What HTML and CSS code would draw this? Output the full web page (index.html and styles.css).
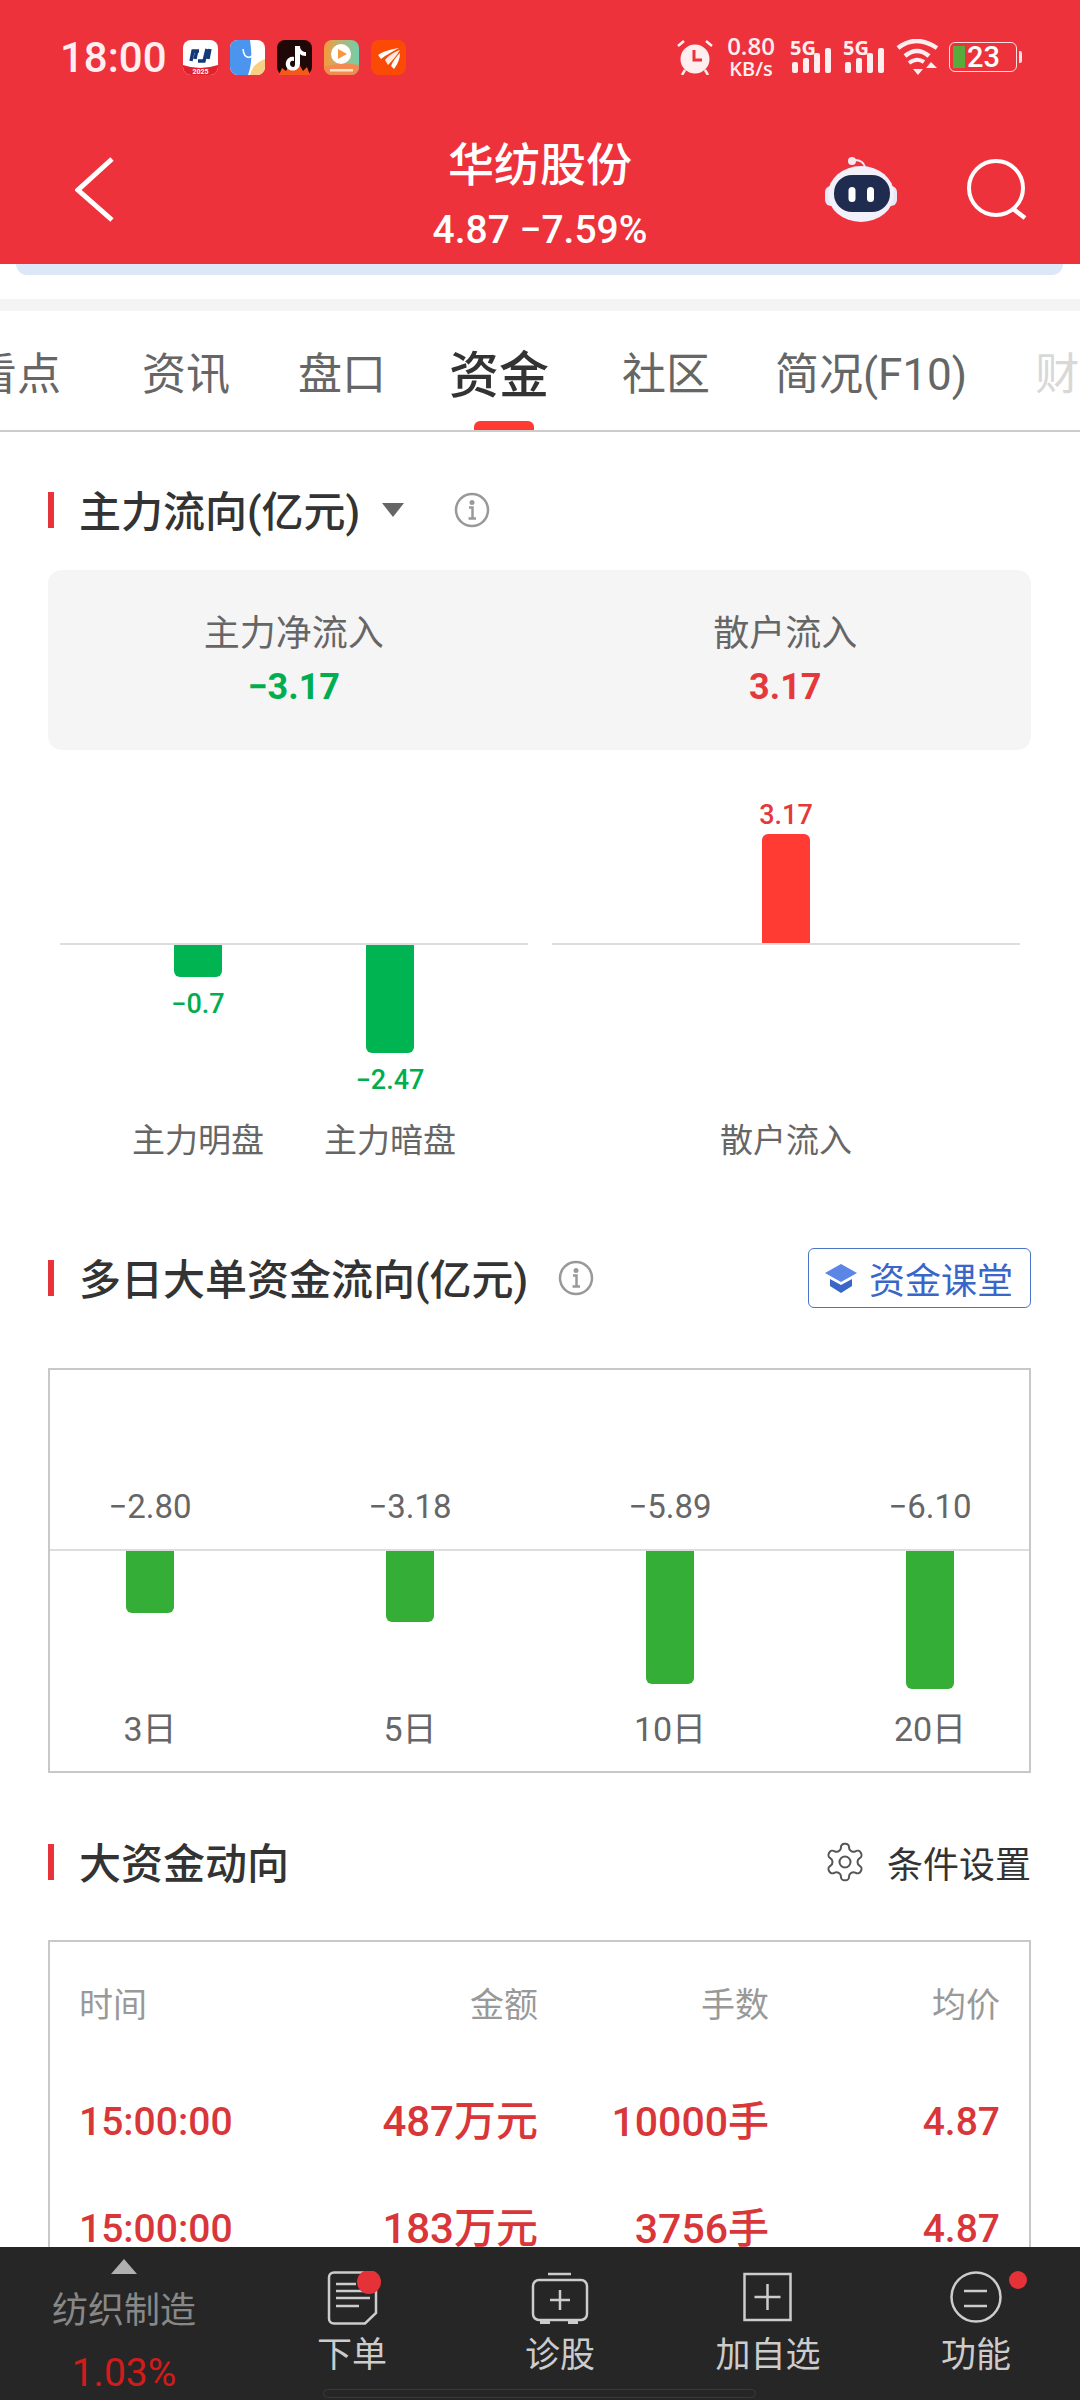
FILE: index.html
```html
<!DOCTYPE html>
<html lang="zh-CN">
<head>
    <meta charset="UTF-8">
    <meta name="viewport" content="width=device-width, initial-scale=1.0">
    <title>华纺股份</title>
    <link rel="stylesheet" href="styles.css">
</head>
<body>
    <header class="header">
        <div class="status-bar">
            <span class="time">18:00</span>
            <div class="app-icons">
                <svg class="app-icon" viewBox="0 0 35 35">
                    <rect width="35" height="35" rx="8" fill="#fff"/>
                    <path d="M0 25Q17 31 35 25V27a8 8 0 0 1-8 8H8a8 8 0 0 1-8-8z" fill="#e0222f"/>
                    <path d="M8 21L10 11H16M14 10L12 19M15 21H21L24 9M27 9L25 19" fill="none" stroke="#123a78" stroke-width="3.4"/>
                    <text x="17.5" y="33.5" class="app-tiny">2025</text>
                </svg>
                <svg class="app-icon" viewBox="0 0 35 35">
                    <rect width="35" height="35" rx="8" fill="#fff"/>
                    <path d="M8 0H20C22 14 22 24 18 35H8a8 8 0 0 1-8-8V8a8 8 0 0 1 8-8z" fill="#4c95ee"/>
                    <path d="M20 35C22 28 25 23 35 19V27a8 8 0 0 1-8 8z" fill="#f8d084"/>
                    <path d="M13 9C14 20 24 20 24 10" fill="none" stroke="#fff" stroke-width="1.6"/>
                </svg>
                <svg class="app-icon" viewBox="0 0 35 35">
                    <rect width="35" height="35" rx="8" fill="#200808"/>
                    <path d="M2 35L5 28L9 31L12 25L17 30L22 24L26 31L30 27L33 35z" fill="#f4581c"/>
                    <path d="M18 6H23C23 10 26 12 29 12V16C26 16 24 15 23 14V23C23 28 19 31 15 30.500C10 30 8 26 9 22C10 18 14 16 17 17V21C14 20 13 22 13 24C13 26 15 27 16 27C18 27 18 25 18 23z" fill="#fff"/>
                </svg>
                <svg class="app-icon" viewBox="0 0 35 35">
                    <defs>
                        <linearGradient id="playGrad" x1="0" y1="0" x2="1" y2="0">
                            <stop offset="0" stop-color="#f79a3c"/>
                            <stop offset="1" stop-color="#6fd0b0"/>
                        </linearGradient>
                    </defs>
                    <rect width="35" height="35" rx="8" fill="url(#playGrad)"/>
                    <path d="M0 27Q17 21 35 25V27a8 8 0 0 1-8 8H8a8 8 0 0 1-8-8z" fill="#f58a50"/>
                    <circle cx="17" cy="14" r="10" fill="#fff"/>
                    <path d="M14 9L23 14L14 19z" fill="#f59a3c"/>
                    <rect x="6" y="29" width="23" height="2.500" fill="#ffe2c8"/>
                </svg>
                <svg class="app-icon" viewBox="0 0 35 35">
                    <rect width="35" height="35" rx="8" fill="#fb4a05"/>
                    <path d="M7 15C13 11 20 9 28 8C22 11 15 15 10 19z" fill="#fff"/>
                    <path d="M14 20C17 16 23 12 29 10C26 15 21 21 17 25z" fill="#ffe9df"/>
                    <path d="M20 26C22 21 26 16 29 13C29 18 27 24 23 29z" fill="#fff"/>
                </svg>
            </div>
            <div class="status-right">
                <svg class="alarm" viewBox="0 0 36 36">
                    <circle cx="18" cy="20" r="14.500" fill="#ffeef0"/>
                    <path d="M1 7L7 2M35 7L29 2M5 36L8 31M31 36L28 31" stroke="#ffeef0" stroke-width="2.500"/>
                    <path d="M17 11V21H25" fill="none" stroke="#ee323c" stroke-width="3"/>
                </svg>
                <div class="net-speed">
                    <span class="net-num">0.80</span>
                    <span class="net-unit">KB/s</span>
                </div>
                <svg class="signal" viewBox="0 -8 42 48">
                    <text x="0" y="18" class="signal-label">5G</text>
                    <rect x="2" y="25" width="6" height="11" rx="2"/>
                    <rect x="13" y="21" width="6" height="15" rx="2"/>
                    <rect x="24" y="16" width="6" height="20" rx="2"/>
                    <rect x="35" y="11" width="6" height="25" rx="2"/>
                </svg>
                <svg class="signal" viewBox="0 -8 42 48">
                    <text x="0" y="18" class="signal-label">5G</text>
                    <rect x="2" y="25" width="6" height="11" rx="2"/>
                    <rect x="13" y="21" width="6" height="15" rx="2"/>
                    <rect x="24" y="16" width="6" height="20" rx="2"/>
                    <rect x="35" y="11" width="6" height="25" rx="2"/>
                </svg>
                <svg class="wifi" viewBox="0 0 43 36">
                    <path d="M2 9Q20 -5 41 9M9 17Q21 7 33 17" fill="none" stroke="#ffeef0" stroke-width="4.500"/>
                    <path d="M13 24Q21 18 28 23" fill="none" stroke="#ffeef0" stroke-width="4"/>
                    <path d="M17 30H27L22 36z" fill="#ffeef0"/>
                    <path d="M30 29L35 23L41 29z" fill="#ffeef0"/>
                </svg>
                <div class="battery">
                    <span class="battery-fill"></span>
                    <span class="battery-num">23</span>
                </div>
            </div>
        </div>
        <div class="nav-bar">
            <div class="nav-left">
                <svg class="back-icon" viewBox="0 0 40 66">
                    <path d="M37 3L3 34L37 64" fill="none" stroke="#fff" stroke-width="5"/>
                </svg>
            </div>
            <div class="nav-title">
                <div class="stock-name">华纺股份</div>
                <div class="stock-price">4.87 −7.59%</div>
            </div>
            <div class="nav-right">
                <svg class="robot" viewBox="0 0 72 66">
                    <circle cx="27" cy="5" r="4" fill="#f4e9f2"/>
                    <path d="M30 4Q38 4 40 11" fill="none" stroke="#f4e9f2" stroke-width="2"/>
                    <rect x="0" y="30" width="72" height="20" rx="6" fill="#e6e8f6"/>
                    <ellipse cx="36" cy="38" rx="33" ry="28" fill="#f2f1fb"/>
                    <rect x="9" y="19" width="56" height="37" rx="18" fill="#1f2c50"/>
                    <rect x="23.500" y="31" width="7" height="15" rx="3.500" fill="#fff"/>
                    <rect x="42" y="31" width="7" height="15" rx="3.500" fill="#fff"/>
                </svg>
                <svg class="search-icon" viewBox="0 0 64 62">
                    <circle cx="31" cy="30" r="27" fill="none" stroke="#fff" stroke-width="4"/>
                    <path d="M47 50L60 60" stroke="#fff" stroke-width="4.500"/>
                </svg>
            </div>
        </div>
    </header>
    <div class="promo-strip"></div>
    <div class="grey-gap"></div>

    <nav class="tabs">
        <span class="tab tab-first">看点</span>
        <span class="tab">资讯</span>
        <span class="tab">盘口</span>
        <span class="tab active">资金</span>
        <span class="tab">社区</span>
        <span class="tab tab-f10">简况(F10)</span>
        <span class="tab faded">财务</span>
    </nav>

    <section class="section flow-section">
        <div class="sec-head">
            <h2 class="sec-title">主力流向(亿元)</h2>
            <span class="caret"></span>
            <svg class="info-icon info-far" viewBox="0 0 36 36">
                <circle cx="18" cy="18" r="16" fill="none" stroke="#999" stroke-width="2.500"/>
                <circle cx="18" cy="10.500" r="2.500" fill="#999"/>
                <path d="M15 15.500H18.500V26M14.500 26.500H22" fill="none" stroke="#999" stroke-width="2.500"/>
            </svg>
        </div>
        <div class="summary-card">
            <div class="summary-col">
                <div class="summary-label">主力净流入</div>
                <div class="summary-value green">−3.17</div>
            </div>
            <div class="summary-col">
                <div class="summary-label">散户流入</div>
                <div class="summary-value red">3.17</div>
            </div>
        </div>
        <div class="flow-chart">
            <div class="flow-panel">
                <div class="up-row">
                    <div class="flow-col"></div>
                    <div class="flow-col"></div>
                </div>
                <div class="down-row">
                    <div class="flow-col">
                        <div class="flow-bar bar-green" style="height: 32px"></div>
                        <div class="flow-num green">−0.7</div>
                    </div>
                    <div class="flow-col">
                        <div class="flow-bar bar-green" style="height: 108px"></div>
                        <div class="flow-num green">−2.47</div>
                    </div>
                </div>
                <div class="name-row">
                    <div class="flow-name">主力明盘</div>
                    <div class="flow-name">主力暗盘</div>
                </div>
            </div>
            <div class="flow-panel">
                <div class="up-row">
                    <div class="flow-col">
                        <div class="flow-num red">3.17</div>
                        <div class="flow-bar bar-red" style="height: 109px"></div>
                    </div>
                </div>
                <div class="down-row"></div>
                <div class="name-row">
                    <div class="flow-name">散户流入</div>
                </div>
            </div>
        </div>
    </section>

    <section class="section days-section">
        <div class="sec-head sec-head-tall">
            <h2 class="sec-title">多日大单资金流向(亿元)</h2>
            <svg class="info-icon info-near" viewBox="0 0 36 36">
                <circle cx="18" cy="18" r="16" fill="none" stroke="#999" stroke-width="2.500"/>
                <circle cx="18" cy="10.500" r="2.500" fill="#999"/>
                <path d="M15 15.500H18.500V26M14.500 26.500H22" fill="none" stroke="#999" stroke-width="2.500"/>
            </svg>
            <div class="class-btn">
                <svg class="cap-icon" viewBox="0 0 34 34">
                    <path d="M17 3L33 12L17 21L1 12z" fill="#5b86e5"/>
                    <path d="M6 18L17 24L28 18V25L17 32L6 25z" fill="#3a66c8"/>
                </svg>
                <span>资金课堂</span>
            </div>
        </div>
        <div class="days-box">
            <div class="days-up">
                <div class="days-num">−2.80</div>
                <div class="days-num">−3.18</div>
                <div class="days-num">−5.89</div>
                <div class="days-num">−6.10</div>
            </div>
            <div class="days-down">
                <div class="days-col"><div class="days-bar" style="height: 62px"></div></div>
                <div class="days-col"><div class="days-bar" style="height: 71px"></div></div>
                <div class="days-col"><div class="days-bar" style="height: 133px"></div></div>
                <div class="days-col"><div class="days-bar" style="height: 138px"></div></div>
            </div>
            <div class="days-names">
                <div class="days-name">3日</div>
                <div class="days-name">5日</div>
                <div class="days-name">10日</div>
                <div class="days-name">20日</div>
            </div>
        </div>
    </section>

    <section class="section big-section">
        <div class="sec-head">
            <h2 class="sec-title">大资金动向</h2>
            <div class="settings">
                <svg class="gear-icon" viewBox="0 0 24 24">
                    <path d="M12.220 2h-.44a2 2 0 0 0-2 2v.18a2 2 0 0 1-1 1.730l-.43.25a2 2 0 0 1-2 0l-.15-.08a2 2 0 0 0-2.730.73l-.22.38a2 2 0 0 0 .73 2.730l.15.1a2 2 0 0 1 1 1.720v.51a2 2 0 0 1-1 1.740l-.15.09a2 2 0 0 0-.73 2.730l.22.38a2 2 0 0 0 2.730.73l.15-.08a2 2 0 0 1 2 0l.43.25a2 2 0 0 1 1 1.730V20a2 2 0 0 0 2 2h.44a2 2 0 0 0 2-2v-.18a2 2 0 0 1 1-1.730l.43-.25a2 2 0 0 1 2 0l.15.08a2 2 0 0 0 2.730-.73l.22-.39a2 2 0 0 0-.73-2.730l-.15-.08a2 2 0 0 1-1-1.740v-.5a2 2 0 0 1 1-1.740l.15-.09a2 2 0 0 0 .73-2.730l-.22-.38a2 2 0 0 0-2.730-.73l-.15.08a2 2 0 0 1-2 0l-.43-.25a2 2 0 0 1-1-1.730V4a2 2 0 0 0-2-2z" fill="none" stroke="#555" stroke-width="1.100"/>
                    <circle cx="12" cy="12" r="3" fill="none" stroke="#555" stroke-width="1.100"/>
                </svg>
                <span>条件设置</span>
            </div>
        </div>
        <div class="trade-box">
            <div class="trade-row trade-head">
                <span class="cell-time">时间</span>
                <span>金额</span>
                <span>手数</span>
                <span>均价</span>
            </div>
            <div class="trade-row">
                <span class="cell-time cell-num">15:00:00</span>
                <span>487万元</span>
                <span class="cell-lots">10000手</span>
                <span class="cell-num">4.87</span>
            </div>
            <div class="trade-row">
                <span class="cell-time cell-num">15:00:00</span>
                <span>183万元</span>
                <span class="cell-lots">3756手</span>
                <span class="cell-num">4.87</span>
            </div>
        </div>
    </section>

    <footer class="bottom-bar">
        <div class="sector">
            <span class="sector-arrow"></span>
            <div class="sector-name">纺织制造</div>
            <div class="sector-pct">1.03%</div>
        </div>
        <div class="bar-item">
            <svg class="bar-icon" viewBox="0 0 60 54">
                <path d="M12 1.500H43C49 1.500 54 5 54 11V42L43 52.500H12C9 52.500 7 50.500 7 47.500V6.500C7 3.500 9 1.500 12 1.500z" fill="none" stroke="#ccc" stroke-width="2.500"/>
                <path d="M14 13H34M14 20H48M14 27H48M14 35H37" stroke="#ccc" stroke-width="2.500"/>
                <circle cx="47" cy="11" r="12" fill="#e53238"/>
            </svg>
            <span class="bar-label">下单</span>
        </div>
        <div class="bar-item">
            <svg class="bar-icon" viewBox="0 0 60 54">
                <path d="M18 3H41" stroke="#ccc" stroke-width="2.500"/>
                <rect x="3" y="9" width="54" height="40" rx="6" fill="none" stroke="#ccc" stroke-width="2.500"/>
                <path d="M10 49H20V53H10zM38 49H48V53H38z" fill="#ccc"/>
                <path d="M30 19V39M20 29H40" stroke="#ccc" stroke-width="2.500"/>
            </svg>
            <span class="bar-label">诊股</span>
        </div>
        <div class="bar-item">
            <svg class="bar-icon" viewBox="0 0 60 54">
                <rect x="6.500" y="3" width="46" height="46" fill="none" stroke="#ccc" stroke-width="2.500"/>
                <path d="M29.500 13V39M16.500 26H42.500" stroke="#ccc" stroke-width="2.500"/>
            </svg>
            <span class="bar-label">加自选</span>
        </div>
        <div class="bar-item">
            <svg class="bar-icon bar-icon-dot" viewBox="0 0 60 54">
                <circle cx="30" cy="26" r="24.500" fill="none" stroke="#ccc" stroke-width="2.500"/>
                <path d="M18 20H41M18 35H41" stroke="#ccc" stroke-width="2.500"/>
                <circle cx="72" cy="9" r="9" fill="#e53238"/>
            </svg>
            <span class="bar-label">功能</span>
        </div>
        <div class="home-pill"></div>
    </footer>
</body>
</html>
```

FILE: styles.css
```css
body {
    font-family: Roboto, 'Noto Sans CJK SC', sans-serif;
    background-color: #fff;
    position: relative;
    width: 1080px;
    height: 2400px;
    margin: 0;
    overflow: hidden;
    color: #333;
}
.green {
    color: #00ae50;
}
.red {
    color: #e5383b;
}

/* header */
.header {
    height: 264px;
    background-color: #ee323c;
}
.status-bar {
    display: flex;
    align-items: center;
    height: 114px;
    padding: 0 63px 0 60px;
}
.time {
    font-size: 42px;
    font-weight: 500;
    color: #ffeef0;
}
.app-icons {
    display: flex;
    gap: 12px;
    margin-left: 16px;
}
.app-icon {
    width: 35px;
    height: 35px;
}
.app-tiny {
    font-family: Roboto, sans-serif;
    font-size: 7px;
    font-weight: 700;
    fill: #fff;
    text-anchor: middle;
}
.status-right {
    display: flex;
    align-items: center;
    margin-left: auto;
}
.alarm {
    width: 36px;
    height: 36px;
    margin-right: 15px;
}
.net-speed {
    display: flex;
    flex-direction: column;
    align-items: center;
    width: 46px;
    margin-right: 16px;
    color: #ffeef0;
    font-family: 'Open Sans', sans-serif;
    font-weight: 600;
}
.net-num {
    font-size: 24px;
    line-height: 24px;
}
.net-unit {
    font-size: 20px;
    line-height: 22px;
}
.signal {
    width: 42px;
    height: 48px;
    margin: 0 11px 8px 0;
    fill: #ffeef0;
}
.signal-label {
    font-family: 'Open Sans', sans-serif;
    font-size: 20px;
    font-weight: 700;
}
.wifi {
    width: 43px;
    height: 36px;
    margin-right: 10px;
}
.battery {
    position: relative;
    display: flex;
    align-items: center;
    gap: 2px;
    box-sizing: border-box;
    width: 68px;
    height: 30px;
    padding-left: 3px;
    border: 1.5px solid #ffdfe1;
    border-radius: 6px;
}
.battery::after {
    content: '';
    position: absolute;
    right: -6px;
    top: 8px;
    width: 3px;
    height: 12px;
    background-color: #ffdfe1;
    border-radius: 0 2px 2px 0;
}
.battery-fill {
    width: 12px;
    height: 22px;
    background-color: #57ab3c;
}
.battery-num {
    font-size: 29px;
    font-weight: 500;
    line-height: 27px;
    color: #fff;
}
.nav-bar {
    display: grid;
    grid-template-columns: 1fr auto 1fr;
    align-items: center;
    height: 150px;
}
.nav-left {
    padding-left: 75px;
    display: flex;
}
.back-icon {
    width: 40px;
    height: 66px;
}
.nav-title {
    text-align: center;
    color: #fff;
    padding-top: 16px;
    padding-bottom: 4px;
}
.stock-name {
    font-size: 46px;
    font-weight: 500;
    line-height: 60px;
}
.stock-price {
    margin-top: 10px;
    font-size: 39px;
    font-weight: 500;
    line-height: 50px;
}
.nav-right {
    display: flex;
    align-items: center;
    justify-content: flex-end;
    padding-right: 51px;
}
.robot {
    width: 72px;
    height: 66px;
}
.search-icon {
    width: 64px;
    height: 62px;
    margin-left: 68px;
}
.promo-strip {
    height: 11px;
    margin: 0 17px 0 16px;
    background-color: #dce8f8;
    border-radius: 0 0 14px 14px;
}
.grey-gap {
    height: 12px;
    margin-top: 24px;
    background-color: #f4f4f4;
}

/* tabs */
.tabs {
    display: flex;
    align-items: center;
    gap: 68px;
    box-sizing: border-box;
    height: 121px;
    border-bottom: 2px solid #ccc;
    overflow: hidden;
    white-space: nowrap;
}
.tab {
    position: relative;
    font-size: 44px;
    color: #666;
}
.tab-first {
    margin-left: -27px;
    margin-right: 13px;
}
.tab-f10 {
    margin-left: -3px;
}
.tab.active {
    margin-left: -5px;
    margin-right: 5px;
    font-size: 50px;
    font-weight: 500;
    color: #333;
}
.tab.active::after {
    content: '';
    position: absolute;
    left: 25px;
    bottom: -26px;
    width: 60px;
    height: 12px;
    background-color: #ff3a33;
    border-radius: 6px 6px 0 0;
}
.tab.faded {
    color: #d8d8d8;
}

/* sections */
.section {
    padding: 0 49px 0 48px;
}
.flow-section {
    padding-top: 60px;
}
.days-section {
    padding-top: 87px;
}
.big-section {
    padding-top: 71px;
}
.sec-head {
    display: flex;
    align-items: center;
    height: 36px;
}
.sec-head-tall {
    height: 60px;
}
.sec-title {
    height: 36px;
    margin: 0;
    padding-left: 25px;
    font-size: 42px;
    font-weight: 500;
    line-height: 42px;
    color: #333;
    border-left: 6px solid #e8333a;
}
.caret {
    width: 0;
    height: 0;
    margin-left: 22px;
    border-left: 11px solid transparent;
    border-right: 11px solid transparent;
    border-top: 14px solid #666;
}
.info-icon {
    width: 36px;
    height: 36px;
}
.info-far {
    margin-left: 50px;
}
.info-near {
    margin-left: 30px;
}
.summary-card {
    display: grid;
    grid-template-columns: 1fr 1fr;
    height: 180px;
    margin-top: 42px;
    padding-top: 44px;
    box-sizing: border-box;
    background-color: #f5f5f5;
    border-radius: 14px;
    text-align: center;
}
.summary-label {
    font-size: 36px;
    line-height: 40px;
    color: #666;
}
.summary-value {
    margin-top: 13px;
    font-size: 36px;
    font-weight: 700;
    line-height: 40px;
}

/* flow chart */
.flow-chart {
    display: flex;
    gap: 24px;
    margin: 0 11px 0 12px;
}
.flow-panel {
    width: 468px;
}
.up-row, .down-row, .name-row {
    display: flex;
    justify-content: center;
}
.up-row {
    height: 193px;
    align-items: flex-end;
}
.down-row {
    height: 176px;
    border-top: 2px solid #ddd;
}
.flow-col {
    display: flex;
    flex-direction: column;
    align-items: center;
    width: 192px;
}
.flow-bar {
    width: 48px;
}
.bar-green {
    background-color: #00b551;
    border-radius: 0 0 6px 6px;
}
.bar-red {
    background-color: #ff3b33;
    border-radius: 6px 6px 0 0;
}
.flow-num {
    font-size: 27px;
    font-weight: 500;
    line-height: 30px;
    margin: 4px 0;
}
.down-row .flow-num {
    margin-top: 12px;
}
.flow-name {
    width: 192px;
    font-size: 33px;
    line-height: 40px;
    color: #666;
    text-align: center;
}

/* multi day chart */
.class-btn {
    display: flex;
    align-items: center;
    gap: 11px;
    box-sizing: border-box;
    height: 60px;
    margin-left: auto;
    padding: 0 17px 0 15px;
    border: 1.5px solid #4a74c9;
    border-radius: 6px;
    font-size: 36px;
    color: #3a66c8;
}
.cap-icon {
    width: 34px;
    height: 34px;
}
.days-box {
    box-sizing: border-box;
    height: 405px;
    margin-top: 60px;
    border: 2px solid #c8c8c8;
}
.days-up, .days-down, .days-names {
    display: grid;
    grid-template-columns: repeat(4, 200px);
    gap: 60px;
    text-align: center;
}
.days-up {
    box-sizing: border-box;
    height: 179px;
    padding-top: 117px;
}
.days-num {
    font-size: 33px;
    line-height: 40px;
    color: #666;
}
.days-down {
    height: 156px;
    border-top: 2px solid #ddd;
}
.days-col {
    display: flex;
    justify-content: center;
}
.days-bar {
    width: 48px;
    background-color: #34ae36;
    border-radius: 0 0 6px 6px;
}
.days-name {
    font-size: 34px;
    line-height: 44px;
    color: #666;
}

/* big money table */
.settings {
    display: flex;
    align-items: center;
    gap: 20px;
    margin-left: auto;
    font-size: 36px;
    color: #333;
}
.gear-icon {
    width: 44px;
    height: 44px;
}
.trade-box {
    height: 420px;
    margin-top: 60px;
    padding: 0 29px 0 29px;
    border: 2px solid #c8c8c8;
    box-sizing: border-box;
}
.trade-row {
    display: grid;
    grid-template-columns: 228px 231px 231px 231px;
    align-items: center;
    height: 107px;
    font-size: 42px;
    font-weight: 500;
    line-height: 50px;
    color: #d9363a;
    text-align: right;
    white-space: nowrap;
}
.trade-row.trade-head {
    height: 126px;
    font-size: 34px;
    font-weight: 400;
    color: #999;
}
.cell-time {
    text-align: left;
}
.cell-num {
    font-size: 39px;
}
.cell-lots {
    font-size: 41px;
}

/* bottom bar */
.bottom-bar {
    position: absolute;
    left: 0;
    right: 0;
    bottom: 0;
    display: grid;
    grid-template-columns: 248px repeat(4, 208px);
    height: 153px;
    background-color: #262626;
}
.sector {
    display: flex;
    flex-direction: column;
    align-items: center;
    padding-top: 12px;
}
.sector-arrow {
    width: 0;
    height: 0;
    border-left: 13.500px solid transparent;
    border-right: 13.500px solid transparent;
    border-bottom: 15px solid #b0b0b0;
}
.sector-name {
    margin-top: 15px;
    font-size: 36px;
    line-height: 44px;
    color: #888;
}
.sector-pct {
    margin-top: 18px;
    font-size: 39px;
    line-height: 44px;
    color: #d11c1c;
}
.bar-item {
    display: flex;
    flex-direction: column;
    align-items: center;
    padding-top: 24px;
}
.bar-icon {
    width: 60px;
    height: 54px;
}
.bar-icon-dot {
    overflow: visible;
}
.bar-label {
    margin-top: 9px;
    font-size: 35px;
    line-height: 44px;
    color: #ccc;
}
.home-pill {
    position: absolute;
    left: 323px;
    top: 142px;
    box-sizing: border-box;
    width: 433px;
    height: 9px;
    border: 1.500px solid #3a3a3a;
    border-radius: 5px;
}
```
